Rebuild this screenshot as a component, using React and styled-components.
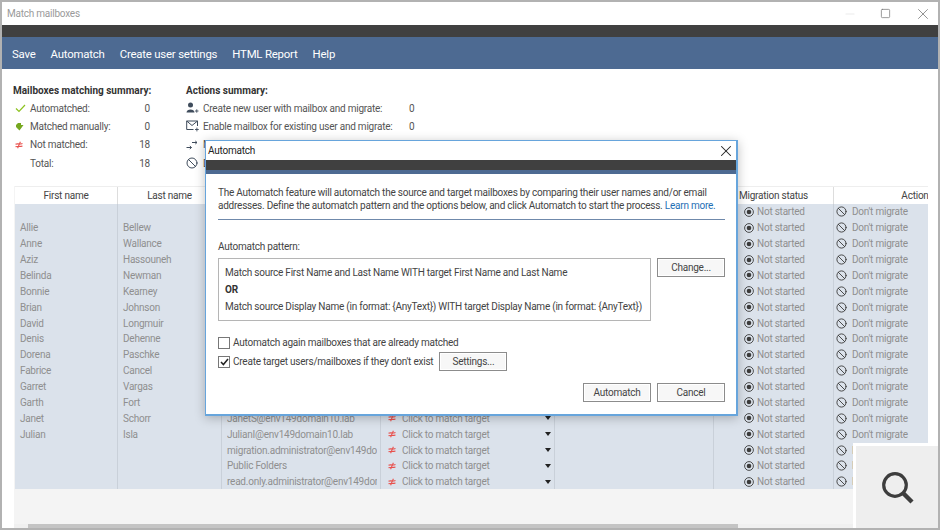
import React from 'react';
import styled, { createGlobalStyle } from 'styled-components';
import { Ban, X, Square, Minus } from 'lucide-react';

const Global = createGlobalStyle`
  html, body { margin: 0; padding: 0; }
  body { font-family: Roboto, "Liberation Sans", sans-serif; font-size: 10px; letter-spacing: -0.23px; color: #444; }
`;

const Frame = styled.div`
  position: relative;
  width: 940px;
  height: 530px;
  box-sizing: border-box;
  border: 2px solid #b2b2b2;
  background: white;
  display: flex;
  flex-direction: column;
  overflow: hidden;
`;
const TitleBar = styled.div`
  height: 23px;
  flex: none;
  display: flex;
  align-items: center;
  justify-content: space-between;
  padding: 0 6px 0 5px;
  color: #9a9a9a;
`;
const WinButtons = styled.div`
  display: flex;
  align-items: center;
  gap: 23px;
`;
const DarkStrip = styled.div`
  height: ${p => p.$h || 12}px;
  flex: none;
  background: #404040;
`;
const Menu = styled.div`
  height: 32px;
  flex: none;
  background: #4d6a92;
  display: flex;
  align-items: center;
  gap: 15px;
  padding: 1px 0 0 10px;
  box-sizing: border-box;
  color: white;
  font-size: 11.4px;
  letter-spacing: -0.2px;
`;
const Summaries = styled.div`
  height: 117px;
  flex: none;
  box-sizing: border-box;
  padding: 15px 0 0 11px;
  display: flex;
  gap: 36px;
`;
const SummaryTitle = styled.div`
  font-weight: 700;
  letter-spacing: 0;
  color: #333;
  line-height: 14px;
  margin-bottom: 1px;
  white-space: nowrap;
`;
const SummaryBlock = styled.div`
  width: ${p => p.$w}px;
`;
const SummaryRow = styled.div`
  display: flex;
  align-items: center;
  height: 18.3px;
`;
const IconSlot = styled.span`
  width: ${p => p.$w || 17}px;
  flex: none;
  display: flex;
  align-items: center;
  padding-left: ${p => p.$pad || 0}px;
  box-sizing: border-box;
`;
const SummaryLabel = styled.span`
  width: ${p => p.$w}px;
  color: #555;
  white-space: nowrap;
`;
const Count = styled.span`
  width: ${p => p.$w}px;
  text-align: ${p => p.$left ? 'left' : 'right'};
  color: #555;
`;
const GridArea = styled.div`
  flex: 1;
  margin: 0 10px 0 12px;
  background: #f4f4f4;
  display: flex;
  flex-direction: column;
  min-height: 0;
`;
const Table = styled.div`
  margin-left: 1px;
  height: 303px;
  flex: none;
  overflow: hidden;
`;
const cols = '103px 104px 159px 174px 159px 120px 162px';
const HeadRow = styled.div`
  display: grid;
  grid-template-columns: ${cols};
  height: 18px;
  background: white;
  border-top: 1px solid #eee;
  box-sizing: border-box;
`;
const HeadCell = styled.div`
  display: flex;
  align-items: center;
  justify-content: center;
  border-right: 1px solid #ddd;
  color: #444;
  white-space: nowrap;
  padding-bottom: 1px;
  &:last-child { border-right: 0; }
`;
const Body = styled.div`
  display: grid;
  grid-template-columns: ${cols};
  grid-auto-rows: 15.88px;
  background: #dbe2eb;
`;
const Cell = styled.div`
  display: flex;
  align-items: center;
  overflow: hidden;
  white-space: nowrap;
  color: #8f8f8f;
  box-sizing: border-box;
  padding-left: ${p => p.$pad ?? 5}px;
  padding-right: ${p => p.$padRight ?? 0}px;
  border-right: 1px solid #c9d0d9;
  &:last-child { border-right: 0; }
`;
const Clip = styled.span`
  overflow: hidden;
  flex: 1;
`;
const Caret = styled.span`
  width: 0;
  height: 0;
  margin-right: 3px;
  border-left: 3.5px solid transparent;
  border-right: 3.5px solid transparent;
  border-top: 4px solid #222;
  flex: none;
`;
const FooterSpace = styled.div`
  flex: 1;
`;
const ScrollTrack = styled.div`
  height: 4px;
  flex: none;
  background: #f0f0f0;
  padding-left: 14px;
`;
const ScrollThumb = styled.div`
  width: 710px;
  height: 100%;
  background: #c4c4c4;
`;

const Modal = styled.div`
  position: absolute;
  left: 203px;
  top: 138px;
  width: 533px;
  height: 276px;
  box-sizing: border-box;
  border: 1px solid #67a5dc;
  border-width: 1px 2px 2px 1px;
  background: white;
  box-shadow: 0 2px 10px rgba(0, 0, 0, 0.25);
  display: flex;
  flex-direction: column;
  z-index: 2;
`;
const ModalTitle = styled.div`
  height: 19px;
  flex: none;
  display: flex;
  align-items: center;
  justify-content: space-between;
  padding: 0 1px 0 2px;
  color: #222;
`;
const ModalBlue = styled.div`
  height: 4px;
  flex: none;
  background: #4d6a92;
`;
const ModalBody = styled.div`
  flex: 1;
  padding: 12px 11px 0 12px;
  display: flex;
  flex-direction: column;
`;
const Intro = styled.p`
  margin: 0;
  line-height: 13px;
  color: #444;
  white-space: nowrap;
  padding-bottom: 7px;
  border-bottom: 1px solid #6f89ab;
`;
const LearnMore = styled.a`
  color: #1f6fb5;
`;
const PatternLabel = styled.div`
  margin-top: 20px;
  line-height: 13px;
  color: #444;
`;
const PatternRow = styled.div`
  display: flex;
  align-items: flex-start;
  gap: 6px;
  margin-top: 5px;
`;
const PatternBox = styled.div`
  width: 433px;
  height: 63px;
  box-sizing: border-box;
  border: 1px solid #b5b5b5;
  padding: 5px 6px;
  line-height: 17px;
  color: #444;
  white-space: nowrap;
`;
const Or = styled.div`
  font-weight: 700;
  color: #333;
`;
const Button = styled.button`
  width: 68px;
  height: 19px;
  flex: none;
  box-sizing: border-box;
  border: 1px solid #8c8c8c;
  background: #f7f7f7;
  box-shadow: inset 0 0 0 1px #fff;
  font: inherit;
  letter-spacing: inherit;
  color: #444;
  padding: 0;
`;
const CheckRow = styled.label`
  display: flex;
  align-items: center;
  gap: 3px;
  color: #444;
  height: 19px;
  margin-top: ${p => p.$mt || 0}px;
  white-space: nowrap;
`;
const SettingsButton = styled(Button)`
  margin-left: 3px;
`;
const Box = styled.span`
  width: 12px;
  height: 12px;
  box-sizing: border-box;
  border: 1px solid #777;
  display: flex;
  align-items: center;
  justify-content: center;
  flex: none;
`;
const DialogActions = styled.div`
  display: flex;
  justify-content: flex-end;
  gap: 6px;
  margin-top: 12px;
`;
const ZoomBadge = styled.div`
  position: absolute;
  right: -2px;
  bottom: -2px;
  width: 87px;
  height: 87px;
  box-sizing: border-box;
  background: #eee;
  border: solid white;
  border-width: 3px 0 0 3px;
  display: flex;
  align-items: center;
  justify-content: center;
  z-index: 3;
`;

const CheckIcon = () => (
  <svg width="11" height="9" viewBox="0 0 11 9"><path d="M1 4.5 L4 7.5 L10 1" fill="none" stroke="#8cc21f" strokeWidth="1.2" /></svg>
);
const ManualIcon = () => (
  <svg width="9" height="9" viewBox="0 0 9 9"><path d="M1 3 L3 1 L6 1 L6 3 L8.5 3 L4.5 8.5 L1 5 Z" fill="#76a820" /></svg>
);
const NotMatchIcon = () => (
  <svg width="8" height="8" viewBox="0 0 8 8"><path d="M0.5 3.2 C2.5 2.2 4 3.7 7.5 2.4 M0.5 5.8 C2.5 4.8 4 6.2 7.5 5 M5.4 0.8 L2.6 7.2" fill="none" stroke="#e8504c" strokeWidth="1.1" /></svg>
);
const UserPlusIcon = () => (
  <svg width="13" height="12" viewBox="0 0 13 12"><circle cx="4.5" cy="3" r="2.5" fill="#3f4c5c" /><path d="M0.5 10.5 C0.5 6.5 8.5 6.5 8.5 10.5 Z" fill="#3f4c5c" /><path d="M9 9 H12.5 M10.75 7.3 V10.7" stroke="#3f4c5c" strokeWidth="0.9" /></svg>
);
const MailPlusIcon = () => (
  <svg width="13" height="12" viewBox="0 0 13 12"><path d="M7.5 9.5 H0.7 V1 H11.5 V6 M0.7 1 L6 5.5 L11.5 1" fill="none" stroke="#3f4c5c" strokeWidth="1" /><path d="M9 9.5 H12.8 M10.9 7.6 V11.4" stroke="#3f4c5c" strokeWidth="0.9" /></svg>
);
const ArrowsIcon = () => (
  <svg width="12" height="11" viewBox="0 0 12 11"><path d="M0.5 8.5 H5.5 M3.8 7 L5.5 8.5 L3.8 10 M6 3.5 H11 M9.3 2 L11 3.5 L9.3 5" fill="none" stroke="#3f4c5c" strokeWidth="1" /></svg>
);
const StatusIcon = () => (
  <svg width="10" height="10" viewBox="0 0 10 10"><circle cx="5" cy="5" r="4.4" fill="none" stroke="#3c3c3c" strokeWidth="0.9" /><circle cx="5" cy="5" r="2.3" fill="#3c3c3c" /></svg>
);
const MagnifierIcon = () => (
  <svg width="32" height="32" viewBox="0 0 32 32">
    <circle cx="13" cy="13" r="11.3" fill="none" stroke="#3d3d3d" strokeWidth="3.2" />
    <path d="M21.5 21.5 L30 30" stroke="#3d3d3d" strokeWidth="4.4" />
  </svg>
);

const people = [
  ['', ''], ['Allie', 'Bellew'], ['Anne', 'Wallance'], ['Aziz', 'Hassouneh'], ['Belinda', 'Newman'],
  ['Bonnie', 'Kearney'], ['Brian', 'Johnson'], ['David', 'Longmuir'], ['Denis', 'Dehenne'],
  ['Dorena', 'Paschke'], ['Fabrice', 'Cancel'], ['Garret', 'Vargas'], ['Garth', 'Fort'],
  ['Janet', 'Schorr', 'JanetS@env149domain10.lab'], ['Julian', 'Isla', 'JulianI@env149domain10.lab'],
  ['', '', 'migration.administrator@env149domain10.lab'], ['', '', 'Public Folders'],
  ['', '', 'read.only.administrator@env149domain10.lab'],
];

const headers = ['First name', 'Last name', '', '', '', 'Migration status', 'Action'];

function MatchingSummary() {
  const rows = [
    [<CheckIcon />, 'Automatched:', 0],
    [<ManualIcon />, 'Matched manually:', 0],
    [<NotMatchIcon />, 'Not matched:', 18],
    [null, 'Total:', 18],
  ];
  return (
    <SummaryBlock $w={137}>
      <SummaryTitle>Mailboxes matching summary:</SummaryTitle>
      {rows.map(([icon, label, n]) => (
        <SummaryRow key={label}>
          <IconSlot $pad={2}>{icon}</IconSlot>
          <SummaryLabel $w={100}>{label}</SummaryLabel>
          <Count $w={20}>{n}</Count>
        </SummaryRow>
      ))}
    </SummaryBlock>
  );
}

function ActionsSummary() {
  const rows = [
    [<UserPlusIcon />, 'Create new user with mailbox and migrate:', 0],
    [<MailPlusIcon />, 'Enable mailbox for existing user and migrate:', 0],
    [<ArrowsIcon />, 'Migrate to existing mailbox:', 0],
    [<Ban size={12} color="#3f4c5c" strokeWidth={2} />, 'Do not migrate:', 18],
  ];
  return (
    <SummaryBlock $w={243}>
      <SummaryTitle>Actions summary:</SummaryTitle>
      {rows.map(([icon, label, n]) => (
        <SummaryRow key={label}>
          <IconSlot>{icon}</IconSlot>
          <SummaryLabel $w={206}>{label}</SummaryLabel>
          <Count $left $w={20}>{n}</Count>
        </SummaryRow>
      ))}
    </SummaryBlock>
  );
}

function AutomatchDialog() {
  return (
    <Modal>
      <ModalTitle>
        Automatch
        <X size={18} color="#222" strokeWidth={1.4} />
      </ModalTitle>
      <DarkStrip $h={10} />
      <ModalBlue />
      <ModalBody>
        <Intro>
          The Automatch feature will automatch the source and target mailboxes by comparing their user names and/or email<br />
          addresses. Define the automatch pattern and the options below, and click Automatch to start the process. <LearnMore>Learn more.</LearnMore>
        </Intro>
        <PatternLabel>Automatch pattern:</PatternLabel>
        <PatternRow>
          <PatternBox>
            <div>Match source First Name and Last Name WITH target First Name and Last Name</div>
            <Or>OR</Or>
            <div>Match source Display Name (in format: {'{AnyText}'}) WITH target Display Name (in format: {'{AnyText}'})</div>
          </PatternBox>
          <Button>Change...</Button>
        </PatternRow>
        <CheckRow $mt={12}>
          <Box />
          Automatch again mailboxes that are already matched
        </CheckRow>
        <CheckRow>
          <Box>
            <svg width="9" height="8" viewBox="0 0 9 8"><path d="M1 4 L3.4 6.6 L8 1" fill="none" stroke="#222" strokeWidth="1.5" /></svg>
          </Box>
          Create target users/mailboxes if they don't exist
          <SettingsButton>Settings...</SettingsButton>
        </CheckRow>
        <DialogActions>
          <Button>Automatch</Button>
          <Button>Cancel</Button>
        </DialogActions>
      </ModalBody>
    </Modal>
  );
}

export default function App() {
  return (
    <Frame>
      <Global />
      <TitleBar>
        Match mailboxes
        <WinButtons>
          <Minus size={14} color="#ddd" strokeWidth={1} />
          <Square size={11} color="#777" strokeWidth={1.6} />
          <X size={18} color="#888" strokeWidth={1.2} />
        </WinButtons>
      </TitleBar>
      <DarkStrip />
      <Menu>
        <span>Save</span>
        <span>Automatch</span>
        <span>Create user settings</span>
        <span>HTML Report</span>
        <span>Help</span>
      </Menu>
      <Summaries>
        <MatchingSummary />
        <ActionsSummary />
      </Summaries>
      <GridArea>
        <Table>
          <HeadRow>
            {headers.map((h, i) => <HeadCell key={i}>{h}</HeadCell>)}
          </HeadRow>
          <Body>
            {people.map(([first, last, mail], i) => (
              <React.Fragment key={i}>
                <Cell>{first}</Cell>
                <Cell>{last}</Cell>
                <Cell $padRight={3}><Clip>{mail}</Clip></Cell>
                <Cell $pad={7}>
                  <IconSlot $w={14}><NotMatchIcon /></IconSlot>
                  <Clip>Click to match target</Clip>
                  <Caret />
                </Cell>
                <Cell />
                <Cell $pad={30}>
                  <IconSlot $w={13}><StatusIcon /></IconSlot>
                  Not started
                </Cell>
                <Cell $pad={2}>
                  <IconSlot $w={16}><Ban size={11} color="#3c3c3c" strokeWidth={2} /></IconSlot>
                  Don't migrate
                </Cell>
              </React.Fragment>
            ))}
          </Body>
        </Table>
        <FooterSpace />
        <ScrollTrack><ScrollThumb /></ScrollTrack>
      </GridArea>
      <AutomatchDialog />
      <ZoomBadge>
        <MagnifierIcon />
      </ZoomBadge>
    </Frame>
  );
}
